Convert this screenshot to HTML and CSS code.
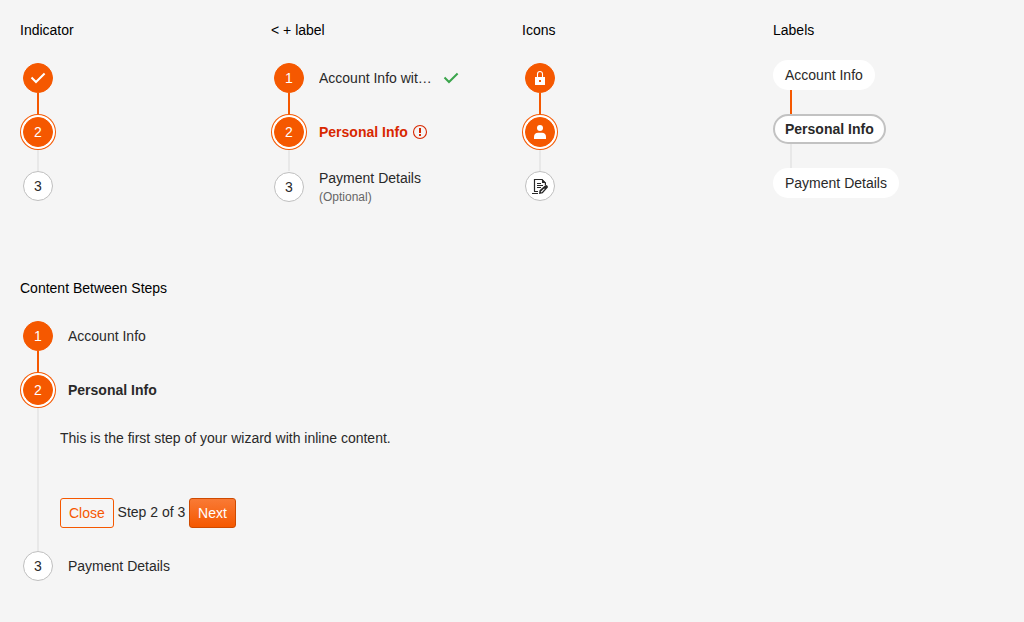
FILE: index.html
```html
<!DOCTYPE html>
<html lang="en">
<head>
<meta charset="utf-8">
<title>Vertical Stepper</title>
<link rel="stylesheet" href="styles.css">
</head>
<body>
<main class="page">
  <section class="example">
    <h2 class="title">Indicator</h2>
    <ol class="stepper">
      <li class="step done">
        <div class="track"><span class="indicator"><svg class="icon" viewBox="0 0 16 16"><path class="stroke" d="M1.5 7.5 6 12 14.600 3.500"/></svg></span><i class="connector"></i></div>
      </li>
      <li class="step current">
        <div class="track"><span class="indicator">2</span><i class="connector"></i></div>
      </li>
      <li class="step">
        <div class="track"><span class="indicator">3</span></div>
      </li>
    </ol>
  </section>

  <section class="example">
    <h2 class="title">&lt; + label</h2>
    <ol class="stepper">
      <li class="step done">
        <div class="track"><span class="indicator">1</span><i class="connector"></i></div>
        <div class="label"><span class="text truncated">Account Info with long title</span><svg class="icon valid" viewBox="0 0 16 16"><path class="stroke" d="M1.5 7.5 6 12 14.600 3.500"/></svg></div>
      </li>
      <li class="step current error">
        <div class="track"><span class="indicator">2</span><i class="connector"></i></div>
        <div class="label"><span class="text">Personal Info</span><svg class="icon" viewBox="0 0 16 16"><circle class="ring" cx="8" cy="8" r="6.500"/><path fill="currentColor" d="M7 4h2v5H7zM7 10h2v2H7z"/></svg></div>
      </li>
      <li class="step tall">
        <div class="track"><span class="indicator">3</span></div>
        <div class="label stacked"><span class="text">Payment Details</span><span class="optional">(Optional)</span></div>
      </li>
    </ol>
  </section>

  <section class="example">
    <h2 class="title">Icons</h2>
    <ol class="stepper">
      <li class="step done">
        <div class="track"><span class="indicator"><svg class="icon" viewBox="0 0 16 16"><path fill="none" stroke="currentColor" stroke-width="1.100" d="M5.500 7.500V4a2.500 2.500 0 0 1 5 0v3.500"/><path fill="currentColor" fill-rule="evenodd" d="M3 7h10v7.500a.5.5 0 0 1-.5.5h-9a.5.5 0 0 1-.5-.5zM7 10v2h2v-2z"/></svg></span><i class="connector"></i></div>
      </li>
      <li class="step current">
        <div class="track"><span class="indicator"><svg class="icon" viewBox="0 0 16 16"><circle cx="8" cy="4" r="3" fill="currentColor"/><path fill="currentColor" d="M2 15v-2.500C2 10.200 3.800 8.700 6 8.700h4c2.200 0 4 1.500 4 3.800V15z"/></svg></span><i class="connector"></i></div>
      </li>
      <li class="step">
        <div class="track"><span class="indicator"><svg class="icon" viewBox="0 0 16 16"><path fill="none" stroke="currentColor" stroke-width="1.200" d="M2.500 13.500V1.500H10l3.400 3.500v2M2 13.500h4M5 5.500h4M5 7.500h6M5 9.500h4M0 15.500h6"/><path fill="currentColor" d="M10 1l4 4h-4z"/><path fill="currentColor" fill-rule="evenodd" d="M7 16l.5-3.800L13.300 7.200q.9-.6 1.900.3t.6 2L10.700 15.200zM8.700 13.800l.9.600 3.200-3.400-.7-.6z"/></svg></span></div>
      </li>
    </ol>
  </section>

  <section class="example">
    <h2 class="title">Labels</h2>
    <ol class="stepper pills">
      <li class="step done"><span class="pill">Account Info</span><i class="connector"></i></li>
      <li class="step current"><span class="pill">Personal Info</span><i class="connector"></i></li>
      <li class="step"><span class="pill">Payment Details</span></li>
    </ol>
  </section>

  <section class="example wide">
    <h2 class="title">Content Between Steps</h2>
    <ol class="stepper">
      <li class="step done">
        <div class="track"><span class="indicator">1</span><i class="connector"></i></div>
        <div class="label"><span class="text">Account Info</span></div>
      </li>
      <li class="step current">
        <div class="track"><span class="indicator">2</span><i class="connector"></i></div>
        <div class="body">
          <div class="label"><span class="text">Personal Info</span></div>
          <div class="content">
            <p class="message">This is the first step of your wizard with inline content.</p>
            <div class="actions"><button class="button outline">Close</button><span class="progress">Step 2 of 3</span><button class="button primary">Next</button></div>
          </div>
        </div>
      </li>
      <li class="step">
        <div class="track"><span class="indicator">3</span></div>
        <div class="label"><span class="text">Payment Details</span></div>
      </li>
    </ol>
  </section>
</main>
</body>
</html>
```
FILE: styles.css
```css
* {
  box-sizing: border-box;
}

body {
  margin: 0;
  background: #f5f5f5;
  color: #292929;
  font: 14px/20px "Liberation Sans", Arial, sans-serif;
}

.page {
  display: grid;
  grid-template-columns: repeat(4, 1fr);
  grid-template-rows: 258px auto;
  padding: 20px 0 0 20px;
}

.wide {
  grid-column: 1 / -1;
}

.title {
  margin: 0 0 20px;
  color: #000;
  font-size: 14px;
  font-weight: 400;
}

.stepper {
  margin: 0;
  padding: 0;
  list-style: none;
}

.step {
  display: flex;
  min-height: 54px;
}

.track {
  display: flex;
  flex: 0 0 36px;
  flex-direction: column;
  align-items: center;
}

.indicator {
  z-index: 1;
  display: flex;
  flex: none;
  align-items: center;
  justify-content: center;
  width: 30px;
  height: 30px;
  margin: 3px;
  border: 1px solid #bfbfbf;
  border-radius: 50%;
  background: #fff;
}

.done .indicator,
.current .indicator {
  border-color: #f55800;
  background: #f55800;
  color: #fff;
}

.current .indicator {
  box-shadow: 0 0 0 2px #fff, 0 0 0 3px #f55800;
}

.tall .indicator {
  margin-top: 4px;
}

.connector {
  flex: 1;
  width: 2px;
  margin: -3px 0;
  background: #e8e8e8;
}

.current .connector {
  margin-top: 0;
}

.done .connector {
  margin-bottom: 0;
  background: #f55800;
}

.icon {
  flex: none;
  width: 16px;
  height: 16px;
}

.stroke {
  fill: none;
  stroke: currentColor;
  stroke-width: 2;
}

.ring {
  fill: none;
  stroke: currentColor;
  stroke-width: 1.1;
}

.label {
  display: flex;
  align-items: center;
  gap: 4px;
  height: 36px;
  padding-left: 12px;
}

.stacked {
  flex-direction: column;
  align-items: flex-start;
  gap: 0;
}

.truncated {
  width: 120px;
  overflow: hidden;
  text-overflow: ellipsis;
  white-space: nowrap;
}

.current .text {
  font-weight: 700;
}

.valid {
  color: #3ba54c;
}

.error .label {
  color: #d82800;
}

.optional {
  color: #666;
  font-size: 12px;
  line-height: 18px;
}

.pills .step {
  flex-direction: column;
  align-items: flex-start;
}

.pills .connector {
  margin: 0 0 0 17px;
}

.pill {
  height: 30px;
  padding: 5px 12px;
  border-radius: 15px;
  background: #fff;
}

.current .pill {
  padding: 3px 10px;
  border: 2px solid #c2c2c2;
  font-weight: 700;
}

.content {
  padding: 20px 0 20px 4px;
}

.message {
  margin: 0 0 50px;
}

.actions {
  display: flex;
  align-items: flex-start;
  height: 30px;
}

.progress {
  padding: 4px 3.8px 0;
}

.button {
  height: 30px;
  padding: 0 8px;
  border: 1px solid #f55800;
  border-radius: 3px;
  background: transparent;
  color: #f55800;
  font: inherit;
}

.primary {
  border-color: #ce4a00;
  background: linear-gradient(#f97a35, #f55800);
  color: #fff;
}
```
